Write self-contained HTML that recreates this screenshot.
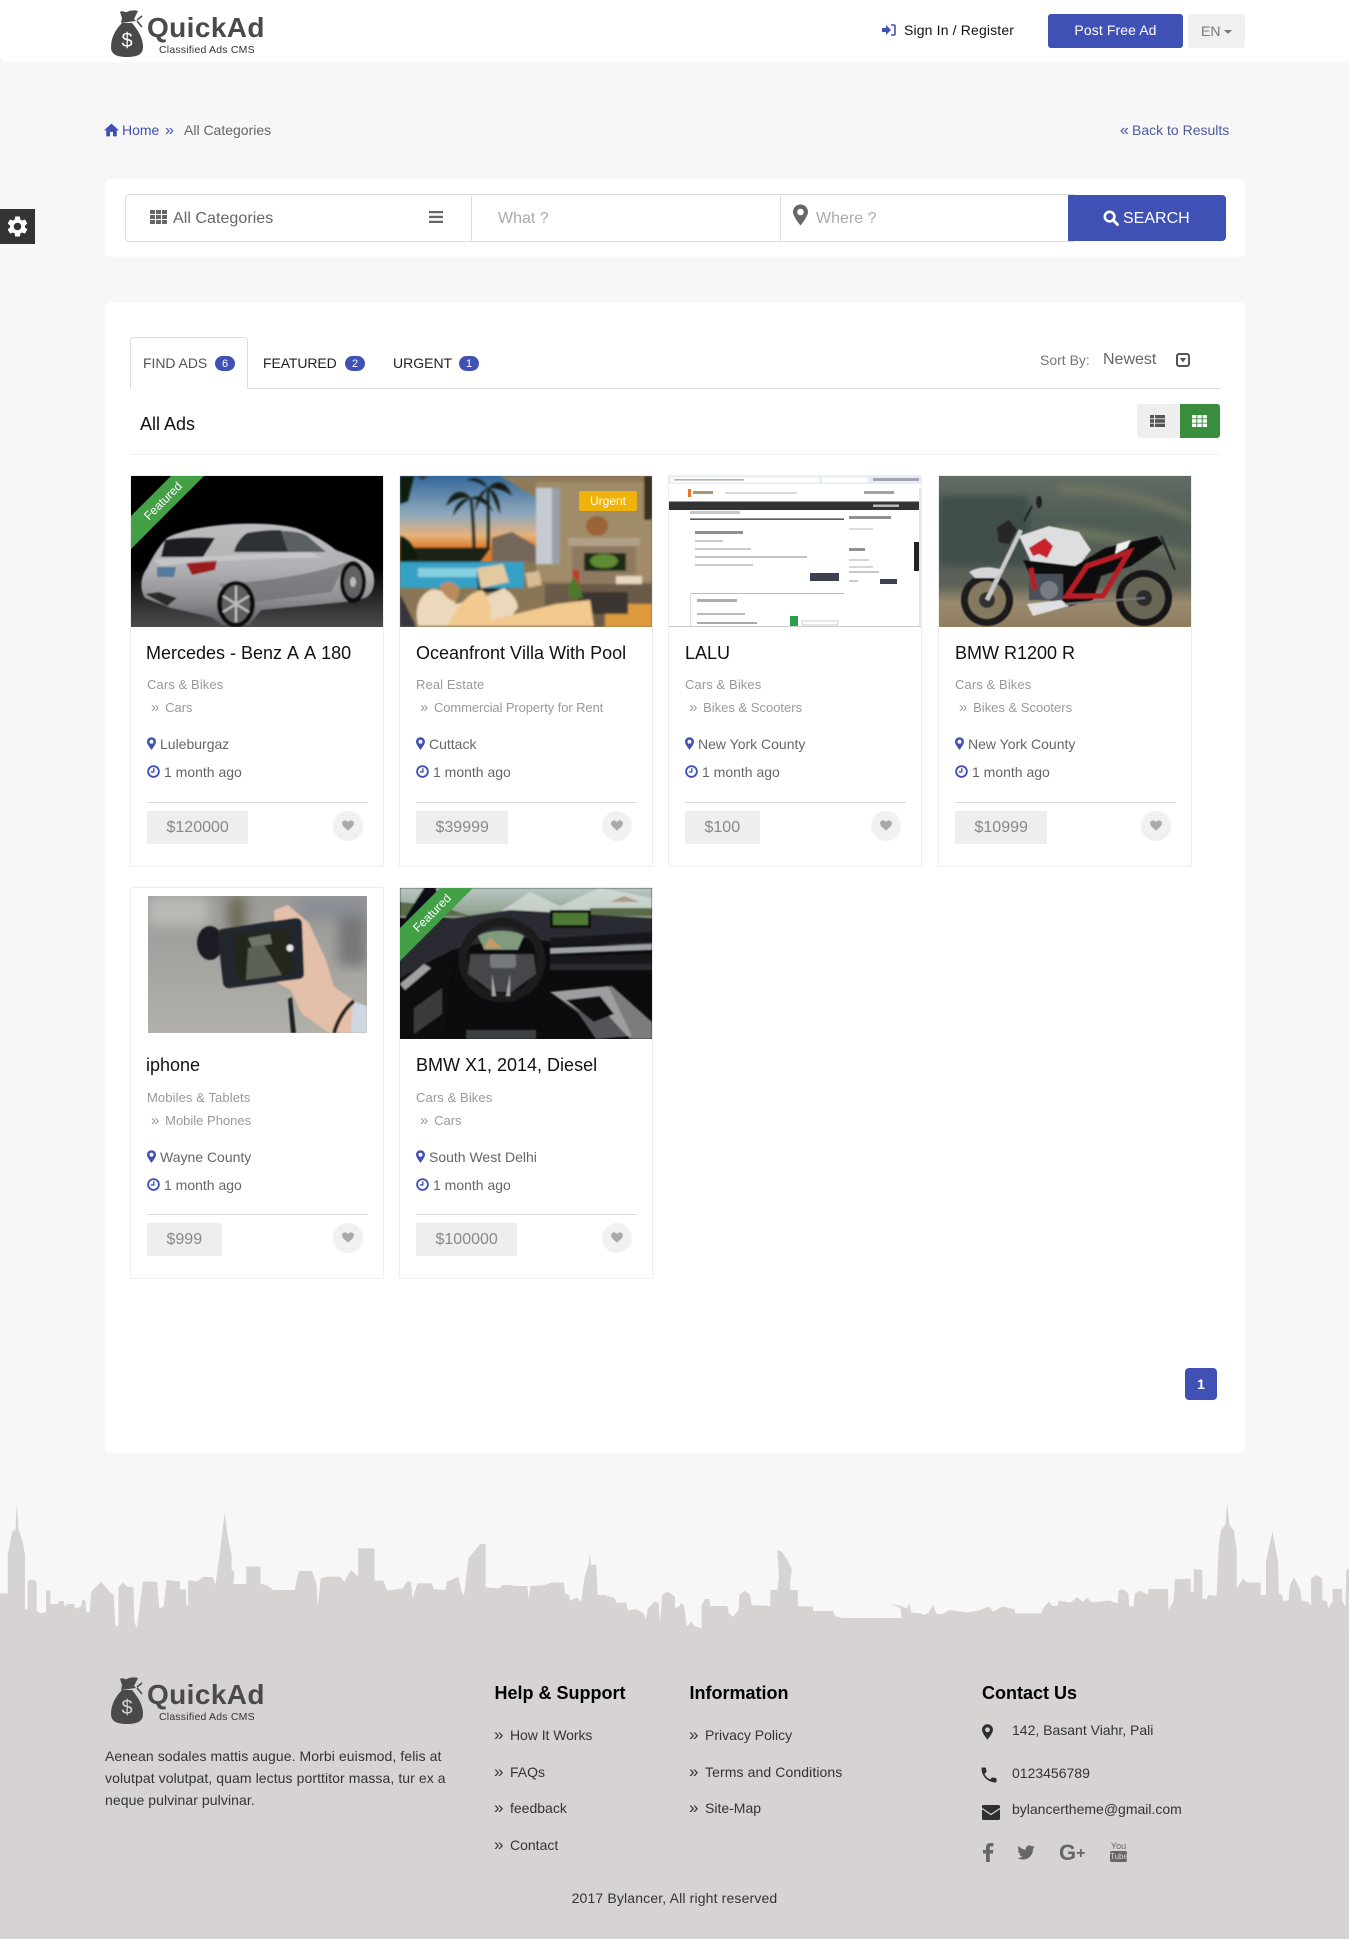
<!DOCTYPE html>
<html lang="en"><head><meta charset="utf-8"><title>QuickAd - All Categories</title>
<style>
*{box-sizing:border-box}
html,body{margin:0;padding:0}
body{position:relative;width:1349px;height:1939px;overflow:hidden;background:#f7f7f7;font-family:"Liberation Sans",Arial,sans-serif;font-size:14px;color:#333}
.a,.t{position:absolute}
.t{white-space:nowrap;line-height:20px}
svg{position:absolute;display:block;overflow:hidden}
.panel{position:absolute;background:#fff;border-radius:5px}
.card{position:absolute;width:254px;height:392px;background:#fff;box-shadow:inset 0 0 0 1px #eee;border-radius:2px}
.img{left:1px;top:1px;width:252px;height:151px}
.ti{left:17px;top:168px;font-size:18px;color:#111;font-kerning:none}
.c1{left:17px;top:200px;font-size:13px;color:#999;letter-spacing:.1px}
.c2{left:21px;top:223px;font-size:13px;color:#999}
.c2 i{font-style:normal;font-size:15px;display:inline-block;width:10.500px;line-height:14px}
.lo{left:30px;top:259px;color:#666}
.tm{left:34px;top:287px;color:#666}
.pi{left:17px;top:262px;width:9px;height:13px;color:#3f51b5}
.cl{left:17px;top:290px;width:13px;height:13px;color:#3f51b5}
.r2 .lo{top:260px}
.r2 .tm{top:288px}
.r2 .pi{top:263px}
.r2 .cl{top:291px}
.hr{position:absolute;left:17px;top:327px;width:221px;height:1px;background:#ddd}
.pr{position:absolute;left:17px;top:336px;height:33px;background:#eee;color:#888;font-size:16px;line-height:34px;padding:0 19.500px}
.he{position:absolute;left:203px;top:336px;width:30px;height:30px;border-radius:50%;background:#f1f1f1}
.he svg{left:9px;top:9px;width:12px;height:11px;color:#aaa}
.badge{position:absolute;width:20px;height:15px;border-radius:8px;background:#3f51b5;color:#fff;font-size:11px;line-height:16px;text-align:center}
.ln{color:#333}
.ch{font-size:17px;color:#333}
.rib{position:absolute;left:-2px;top:19px;width:70px;text-align:center;font-size:12px;line-height:14px;color:#fff;transform:rotate(-45deg)}
.k{left:16px}
</style></head>
<body>
<svg width="0" height="0" style="position:absolute">
<defs>
<symbol id="pin" viewBox="0 0 10 14"><path fill="currentColor" fill-rule="evenodd" d="M5 0C2.200 0 0 2.200 0 5c0 3 5 9 5 9s5-6 5-9c0-2.800-2.200-5-5-5zm0 7.200a2.200 2.200 0 1 1 0-4.400 2.200 2.200 0 0 1 0 4.400z"/></symbol>
<symbol id="clk" viewBox="0 0 13 13"><circle cx="6.500" cy="6.500" r="5.400" fill="none" stroke="currentColor" stroke-width="1.800"/><path d="M6.800 3.200v3.700H3.800" fill="none" stroke="currentColor" stroke-width="1.400"/></symbol>
<symbol id="hrt" viewBox="0 0 14 13"><path fill="currentColor" d="M7 12.500C3 9 0 7 0 4 0 1.800 1.600.5 3.500.5 5 .5 6.300 1.300 7 2.500 7.700 1.300 9 .5 10.500.5 12.400.5 14 1.800 14 4c0 3-3 5-7 8.500z"/></symbol>
<symbol id="bag" viewBox="0 0 32 47"><path fill="currentColor" d="M11 13C5 19 0 27 0 37c0 7 5 10 16 10s16-3 16-10c0-10-6-18-11-24z"/><path fill="currentColor" d="M9 2c3-2 5 1 7 0 3-2 8-2 11-1l-4 8 2 2-15 2 1-5z"/><path d="M26 10l5-4M26 11l5 6" stroke="currentColor" stroke-width="1.600" fill="none"/></symbol>
</defs></svg>

<!-- header -->
<div class="a" style="left:0;top:0;width:1349px;height:62px;background:#fff;border-radius:0 0 6px 6px"></div>
<svg style="left:111px;top:10px;width:32px;height:47px;color:#4a4a4a"><use href="#bag"/></svg>
<div class="t" style="left:111px;top:31px;width:32px;text-align:center;font-size:20px;color:#fff">$</div>
<div class="t" style="left:147px;top:17px;font-size:28px;line-height:22px;font-weight:bold;color:#4a4a4a;letter-spacing:.4px">QuickAd</div>
<div class="t" style="left:159px;top:40px;font-size:10.5px;color:#333;letter-spacing:.2px">Classified Ads CMS</div>

<svg style="left:882px;top:24px;width:14px;height:12px" viewBox="0 0 14 12"><path fill="#3f51b5" d="M0 4h4V1l5 5-5 5V8H0z"/><path fill="none" stroke="#3f51b5" stroke-width="1.600" d="M9 1h3a1 1 0 0 1 1 1v8a1 1 0 0 1-1 1H9"/></svg>
<div class="t" style="left:904px;top:20px;color:#111;letter-spacing:.15px">Sign In / Register</div>
<div class="a" style="left:1048px;top:14px;width:135px;height:34px;background:#3f51b5;border-radius:3px;color:#fff;text-align:center;line-height:32px;letter-spacing:.1px">Post Free Ad</div>
<div class="a" style="left:1188px;top:14px;width:57px;height:34px;background:#f0f0f0;border-radius:3px"></div>
<div class="t" style="left:1201px;top:21px;color:#777">EN</div>
<div class="a" style="left:1224px;top:30px;width:0;height:0;border:4px solid transparent;border-top-color:#777;border-bottom:0"></div>

<!-- breadcrumb -->
<svg style="left:104px;top:123px;width:15px;height:14px" viewBox="2 3 20 17"><path fill="#3f51b5" d="M10 20v-6h4v6h5v-8h3L12 3 2 12h3v8z"/></svg>
<div class="t" style="left:122px;top:120px;color:#3f51b5">Home</div>
<div class="t" style="left:165px;top:121px;color:#3f51b5;font-size:16px">»</div>
<div class="t" style="left:184px;top:120px;color:#666">All Categories</div>
<div class="t" style="left:1120px;top:121px;color:#3f51b5;font-size:16px">«</div>
<div class="t" style="left:1132px;top:120px;color:#4d5a9c">Back to Results</div>

<!-- settings tab -->
<div class="a" style="left:0;top:209px;width:35px;height:35px;background:#333"></div>
<svg style="left:5px;top:214px;width:25px;height:25px" viewBox="0 0 24 24"><path fill="#fff" d="M19.140 12.940c.04-.3.06-.61.06-.94 0-.32-.02-.64-.07-.94l2.030-1.580c.18-.14.23-.41.12-.61l-1.920-3.320c-.12-.22-.37-.29-.59-.22l-2.390.96c-.5-.38-1.030-.7-1.620-.94l-.36-2.540c-.04-.24-.24-.41-.48-.41h-3.840c-.24 0-.43.17-.47.41l-.36 2.540c-.59.24-1.130.57-1.620.94l-2.390-.96c-.22-.08-.47 0-.59.22L2.740 8.870c-.12.21-.08.47.12.61l2.030 1.580c-.05.3-.09.63-.09.94s.02.64.07.94l-2.030 1.580c-.18.14-.23.41-.12.61l1.920 3.320c.12.22.37.29.59.22l2.390-.96c.5.38 1.030.7 1.620.94l.36 2.540c.05.24.24.41.48.41h3.840c.24 0 .44-.17.47-.41l.36-2.540c.59-.24 1.130-.56 1.620-.94l2.390.96c.22.08.47 0 .59-.22l1.920-3.320c.12-.22.07-.47-.12-.61l-2.010-1.580zM12 15.600c-1.980 0-3.600-1.620-3.600-3.600s1.620-3.600 3.600-3.600 3.600 1.620 3.600 3.600-1.620 3.600-3.600 3.600z"/></svg>

<!-- search panel -->
<div class="panel" style="left:105px;top:179px;width:1140px;height:78px"></div>
<div class="a" style="left:125px;top:194px;width:950px;height:48px;border:1px solid #ddd;border-radius:4px 0 0 4px"></div>
<div class="a" style="left:471px;top:195px;width:1px;height:46px;background:#ddd"></div>
<div class="a" style="left:780px;top:195px;width:1px;height:46px;background:#ddd"></div>
<svg style="left:150px;top:210px;width:17px;height:14px" viewBox="0 0 17 14"><path fill="#666" d="M0 0h5v4H0zM6 0h5v4H6zM12 0h5v4h-5zM0 5h5v4H0zM6 5h5v4H6zM12 5h5v4h-5zM0 10h5v4H0zM6 10h5v4H6zM12 10h5v4h-5z"/></svg>
<div class="t" style="left:173px;top:209px;font-size:16px;color:#666;letter-spacing:.05px">All Categories</div>
<svg style="left:429px;top:211px;width:14px;height:12px" viewBox="0 0 14 12"><path fill="#666" d="M0 0h14v2.300H0zM0 4.800h14v2.300H0zM0 9.700h14V12H0z"/></svg>
<div class="t" style="left:498px;top:209px;font-size:16px;color:#aaa">What ?</div>
<svg style="left:793px;top:204px;width:15px;height:22px;color:#666"><use href="#pin" width="15" height="22"/></svg>
<div class="t" style="left:816px;top:209px;font-size:16px;color:#aaa">Where ?</div>
<div class="a" style="left:1068px;top:195px;width:158px;height:46px;background:#3f51b5;border-radius:0 4px 4px 0"></div>
<svg style="left:1103px;top:210px;width:16px;height:16px" viewBox="0 0 16 16"><circle cx="6.600" cy="6.600" r="4.800" fill="none" stroke="#fff" stroke-width="2.600"/><path d="M10 10l4.500 4.500" stroke="#fff" stroke-width="3" stroke-linecap="round"/></svg>
<div class="t" style="left:1123px;top:209px;font-size:16px;color:#fff">SEARCH</div>

<!-- main panel -->
<div class="panel" style="left:105px;top:302px;width:1140px;height:1151px"></div>
<div class="a" style="left:130px;top:388px;width:1090px;height:1px;background:#ddd"></div>
<div class="a" style="left:130px;top:337px;width:118px;height:52px;background:#fff;border:1px solid #ddd;border-bottom:0;border-radius:4px 4px 0 0"></div>
<div class="t" style="left:143px;top:353px;color:#555;letter-spacing:-.05px">FIND ADS</div>
<div class="badge" style="left:215px;top:356px">6</div>
<div class="t" style="left:263px;top:353px;color:#222;letter-spacing:-.1px">FEATURED</div>
<div class="badge" style="left:345px;top:356px">2</div>
<div class="t" style="left:393px;top:353px;color:#222">URGENT</div>
<div class="badge" style="left:459px;top:356px">1</div>
<div class="t" style="left:1040px;top:350px;color:#777">Sort By:</div>
<div class="t" style="left:1103px;top:350px;font-size:16px;color:#666">Newest</div>
<svg style="left:1176px;top:353px;width:14px;height:14px" viewBox="0 0 14 14"><rect x="1" y="1" width="12" height="12" rx="2" fill="none" stroke="#555" stroke-width="2"/><path d="M3.800 5h6.400L7 9.400z" fill="#555"/></svg>
<div class="t" style="left:140px;top:414px;font-size:18px;color:#111">All Ads</div>
<div class="a" style="left:1137px;top:404px;width:43px;height:34px;background:#eee;border-radius:3px 0 0 3px"></div>
<svg style="left:1150px;top:415px;width:15px;height:12px" viewBox="0 0 15 12"><path fill="#555" d="M0 0h4v3.400H0zM5 0h10v3.400H5zM0 4.300h4v3.400H0zM5 4.300h10v3.400H5zM0 8.600h4V12H0zM5 8.600h10V12H5z"/></svg>
<div class="a" style="left:1180px;top:404px;width:40px;height:34px;background:#388e3c;border-radius:0 3px 3px 0"></div>
<svg style="left:1192px;top:415px;width:15px;height:12px" viewBox="0 0 15 12"><path fill="#fff" d="M0 0h4.300v3.400H0zM5.300 0h4.400v3.400H5.300zM10.700 0H15v3.400h-4.300zM0 4.300h4.300v3.400H0zM5.300 4.300h4.400v3.400H5.300zM10.700 4.300H15v3.400h-4.300zM0 8.600h4.300V12H0zM5.300 8.600h4.400V12H5.300zM10.700 8.600H15V12h-4.300z"/></svg>
<div class="a" style="left:130px;top:454px;width:1090px;height:1px;background:#eee"></div>

<!-- card 1 -->
<div class="card" style="left:130px;top:475px">
<svg class="img" viewBox="0 0 252 151"><defs><linearGradient id="fl" x1="0" y1="0" x2="0" y2="1"><stop offset=".6" stop-color="#000"/><stop offset="1" stop-color="#4c4c4c"/></linearGradient><linearGradient id="cb" x1="0" y1="0" x2="0" y2="1"><stop offset="0" stop-color="#bdbdc0"/><stop offset=".45" stop-color="#b0b0b4"/><stop offset=".75" stop-color="#8e8e92"/><stop offset="1" stop-color="#5f5f63"/></linearGradient><filter id="bc"><feGaussianBlur stdDeviation=".7"/></filter></defs>
<rect width="252" height="151" fill="url(#fl)"/>
<g filter="url(#bc)">
<path fill="url(#cb)" d="M14 122C8 112 10 100 16 92 22 80 28 70 36 62 50 54 75 50 103 48c22-1 47 0 62 4 15 5 30 14 40 22 15 6 31 10 37 22 3 12 0 22-8 26l-20 4-84 8-12 15H91l-11-8-40-9z"/>
<path fill="#1d1d21" d="M34 64c15-3 33-3 50-2L72 81H30z"/>
<path fill="#2e3034" d="M103 76c2-8 7-15 13-19 10-2 22-3 33-3l46 22z"/>
<path fill="#5a5f64" d="M150 55c8 0 18 1 25 4l20 17h-38z"/>
<path fill="#9a1c1c" d="M55 87l31-3-2 10-23 5z"/>
<path fill="#56789a" d="M26 91h19l-2 10H26z"/>
<path fill="#6d6d72" d="M88 108c40-2 90-8 128-22l-16 30-92 12z" opacity=".7"/>
<path fill="#d8d8da" d="M22 84c40-4 110-6 158-8l10 6c-60 0-120 4-160 8z" opacity=".5"/>
<path fill="#2a2a2c" d="M14 118l22 12 10-8-18-6z"/>
<ellipse cx="222" cy="106" rx="13" ry="21" fill="#0c0c0c"/><ellipse cx="222" cy="106" rx="9" ry="16" fill="#626266"/><ellipse cx="222" cy="106" rx="3" ry="5" fill="#bbb"/>
<ellipse cx="105" cy="128" rx="19" ry="23" fill="#0c0c0c"/><ellipse cx="105" cy="128" rx="14" ry="19" fill="#5e5e62"/>
<path stroke="#bdbdbd" stroke-width="2.400" fill="none" d="M105 110v36M92 120l26 16M118 120l-26 16"/>
</g>
<path fill="#43a047" d="M40 0h33L0 73V40z"/></svg>
<div class="rib">Featured</div>
<div class="t ti k">Mercedes - Benz A A 180</div>
<div class="t c1">Cars &amp; Bikes</div>
<div class="t c2"><i>»</i> Cars</div>
<svg class="pi"><use href="#pin" width="9" height="13"/></svg><div class="t lo">Luleburgaz</div>
<svg class="cl"><use href="#clk" width="13" height="13"/></svg><div class="t tm">1 month ago</div>
<div class="hr"></div><div class="pr">$120000</div>
<div class="he"><svg><use href="#hrt" width="12" height="11"/></svg></div>
</div>

<!-- card 2 -->
<div class="card" style="left:399px;top:475px">
<svg class="img" viewBox="0 0 252 151"><defs><linearGradient id="sk" x1="0" y1="0" x2="0" y2="1"><stop offset="0" stop-color="#33689a"/><stop offset=".45" stop-color="#8fa8bc"/><stop offset=".7" stop-color="#e6b27a"/><stop offset=".85" stop-color="#dd7a2c"/></linearGradient><filter id="b1"><feGaussianBlur stdDeviation="1"/></filter></defs>
<rect width="252" height="151" fill="#8a7654"/>
<rect width="140" height="85" fill="url(#sk)"/>
<g filter="url(#b1)">
<path fill="#8f7a58" d="M100 0h152v30H150z"/>
<path fill="#a08c68" d="M136 6h116v100H136z"/>
<path fill="#c6cbd2" d="M136 12h24v76h-24z"/><path fill="#9aa0a8" d="M152 12h8v76h-8z"/>
<path fill="#3a2e22" d="M18 0h10l-6 4zM244 0h8v44h-8z"/>
<path fill="#1c2418" d="M0 72h90l-10 14H0z"/>
<path fill="none" stroke="#15201a" stroke-width="2.500" d="M74 76c0-18-1-36-3-54M88 74c1-22 0-42 0-62"/>
<g fill="#121c14"><path d="M71 22C62 12 52 14 46 30c7-6 15-10 25-8zM71 22c-9 0-16 6-18 18 5-8 11-14 18-18zM71 22c9-4 16 0 22 14-6-8-14-12-22-14z"/><path d="M88 12c8-9 18-8 24 8-7-6-15-8-24-8zM88 12c-5-9-13-12-22-8 8 0 15 3 22 8zM88 12c8 3 12 12 12 26-4-10-7-18-12-26zM88 12c-7 3-12 10-13 24 3-9 7-17 13-24z"/></g>
<path fill="#0f1a10" d="M0 0h14l-6 25-8 3zM0 60c8 2 14 10 18 22l-18 5z"/>
<path fill="#75665a" d="M92 62l20-6 24 14v16H92z"/>
<path fill="#8d7a60" d="M172 70h64v38h-64z"/>
<path fill="#b0a088" d="M168 62h72v8h-72z"/>
<path fill="#1c2a16" d="M184 77h42v18h-42z"/><ellipse cx="204" cy="85" rx="14" ry="7" fill="#5f8a30"/>
<ellipse cx="197" cy="50" rx="11" ry="10" fill="#9c6238"/>
<path fill="#e8d8c0" d="M216 100h26v9h-26z"/>
<path fill="#35a0c6" d="M0 86h124v26H0z"/><path fill="#86d0e2" d="M18 92h80v9H18z"/>
<path fill="#6a5a46" d="M145 108h107v43H145z"/><path fill="#dc9a3e" d="M205 128h47v23h-47z"/>
<path fill="#e3c9a0" d="M77 92l26-4 6 18-28 6z"/><path fill="#201c18" d="M77 92l3 20h28l2 22h-4l-2-18H84l-2 12h-4z"/>
<path fill="#d8bc94" d="M125 97l14-2 3 14-14 3z"/>
<path fill="#3a3430" d="M178 116h50v22h-50z"/>
<path fill="#b8382c" d="M172 94l4 24 4 0-1-24z"/><path fill="#4d7a2a" d="M168 112l6-12 6 12 3 10h-14z"/>
<path fill="#34363f" d="M0 118l16 33H0z"/>
<path fill="#ecd8bc" d="M18 150c-4-16 0-30 12-36 8-3 20 4 26 14l30-8 18-8c10 6 14 14 14 20l-14 18z"/>
<path fill="#f2c98f" d="M48 150c6-14 18-34 34-36 8 8 10 18 8 30l66-16 34-4 4 26z"/>
<path fill="#bb8c5e" d="M40 110c6-6 14-6 20 4l-4 12c-8-2-14-8-16-16z"/>
</g>
<rect x="179" y="15" width="58" height="20" rx="2" fill="#efb30c"/></svg>
<div class="t" style="left:180px;top:16px;width:58px;text-align:center;font-size:12px;color:#fff">Urgent</div>
<div class="t ti">Oceanfront Villa With Pool</div>
<div class="t c1">Real Estate</div>
<div class="t c2" style="letter-spacing:-.1px"><i>»</i> Commercial Property for Rent</div>
<svg class="pi"><use href="#pin" width="9" height="13"/></svg><div class="t lo">Cuttack</div>
<svg class="cl"><use href="#clk" width="13" height="13"/></svg><div class="t tm">1 month ago</div>
<div class="hr"></div><div class="pr">$39999</div>
<div class="he"><svg><use href="#hrt" width="12" height="11"/></svg></div>
</div>

<!-- card 3 -->
<div class="card" style="left:668px;top:475px">
<svg class="img" viewBox="0 0 252 151">
<rect width="252" height="151" fill="#fff"/>
<rect width="252" height="8" fill="#e6edf4"/><rect x="2" y="1.500" width="148" height="5" fill="#fff"/><rect x="153" y="1.500" width="46" height="5" fill="#fff"/>
<g fill="#555"><rect x="5" y="3" width="70" height="1.600" opacity=".45"/><rect x="204" y="2" width="46" height="3" opacity=".45"/><rect x="19" y="13" width="3" height="8" fill="#e8762a"/><rect x="24" y="15" width="20" height="3" fill="#8a6a3a" opacity=".7"/><rect x="56" y="16" width="72" height="2" opacity=".22"/><rect x="195" y="15" width="30" height="3" opacity=".55"/></g>
<rect y="25.500" width="250" height="8.500" fill="#333"/><rect x="204" y="28.500" width="26" height="2.500" fill="#bbb"/>
<g fill="#777"><rect x="21" y="35" width="50" height="3" opacity=".4"/><rect x="180" y="40" width="42" height="3" fill="#222" opacity=".5"/><rect x="180" y="52" width="24" height="2" opacity=".25"/><rect x="180" y="72" width="16" height="3" fill="#222" opacity=".5"/><rect x="180" y="83" width="20" height="2" opacity=".3"/><rect x="180" y="90" width="24" height="2" opacity=".3"/><rect x="180" y="95" width="30" height="2" opacity=".4"/><rect x="180" y="104" width="9" height="2" opacity=".4"/></g>
<rect x="21" y="42.500" width="154" height="1.300" fill="#333"/>
<g fill="#555"><rect x="26" y="55" width="48" height="3" fill="#222" opacity=".5"/><rect x="26" y="64" width="28" height="2" opacity=".3"/><rect x="26" y="72" width="56" height="2" opacity=".3"/><rect x="26" y="80" width="112" height="2" opacity=".35"/><rect x="26" y="88" width="58" height="2" opacity=".3"/></g>
<rect x="141" y="97" width="29" height="8" fill="#3d4050"/><rect x="211" y="103" width="17" height="5" fill="#3d4050"/>
<rect x="245" y="66" width="5" height="29" fill="#222"/>
<rect x="21" y="117" width="154" height="1" fill="#bbb"/><rect x="21" y="117" width="1" height="34" fill="#ddd"/>
<rect x="28" y="123" width="40" height="3" fill="#333" opacity=".4"/><rect x="28" y="137" width="48" height="2" fill="#555" opacity=".4"/><rect x="28" y="146" width="60" height="2" fill="#555" opacity=".5"/>
<rect x="121" y="140" width="8" height="11" fill="#2e9e4a"/><rect x="133" y="145" width="36" height="4" fill="none" stroke="#bbb" stroke-width=".7"/>
<rect x="250" y="12" width="2" height="139" fill="#e6e6e6"/>
<rect y="150" width="252" height="1" fill="#ccc"/>
</svg>
<div class="t ti">LALU</div>
<div class="t c1">Cars &amp; Bikes</div>
<div class="t c2"><i>»</i> Bikes &amp; Scooters</div>
<svg class="pi"><use href="#pin" width="9" height="13"/></svg><div class="t lo">New York County</div>
<svg class="cl"><use href="#clk" width="13" height="13"/></svg><div class="t tm">1 month ago</div>
<div class="hr"></div><div class="pr">$100</div>
<div class="he"><svg><use href="#hrt" width="12" height="11"/></svg></div>
</div>

<!-- card 4 -->
<div class="card" style="left:938px;top:475px">
<svg class="img" viewBox="0 0 252 151"><defs><linearGradient id="bg" x1="0" y1="0" x2="0" y2="1"><stop offset="0" stop-color="#626c64"/><stop offset=".3" stop-color="#4f5c54"/><stop offset=".72" stop-color="#5e6258"/><stop offset=".84" stop-color="#9a8a6e"/><stop offset="1" stop-color="#8f7d60"/></linearGradient><filter id="b2"><feGaussianBlur stdDeviation="4"/></filter><filter id="b3"><feGaussianBlur stdDeviation=".6"/></filter></defs>
<rect width="252" height="151" fill="url(#bg)"/>
<g filter="url(#b2)"><path fill="#767b64" d="M120 8c40 0 90 8 132 28v12C210 26 170 18 120 18z" opacity=".7"/><path fill="#6f7860" d="M120 50c40 5 70 10 132 28v8C200 70 170 64 120 60z"/><path fill="#414d48" d="M0 20h90v70H0z"/></g>
<g filter="url(#b3)">
<circle cx="48" cy="124" r="26" fill="#1c1c1c"/><circle cx="48" cy="124" r="19" fill="#857a60"/><circle cx="48" cy="124" r="8" fill="#333"/>
<circle cx="205" cy="122" r="28" fill="#181818"/><circle cx="205" cy="122" r="21" fill="#6a6656"/><circle cx="205" cy="122" r="8" fill="#2a2a2a"/>
<path stroke="#c8c8c8" stroke-width="4.500" d="M48 124L82 54" fill="none"/>
<path fill="#d6d6d8" d="M30 96c10-6 22-6 34-2l-8 8H36z"/>
<path fill="#262626" d="M58 52l12-8 8 10-8 14-10-2z"/><path stroke="#222" stroke-width="2" d="M85 45l8-15" fill="none"/><ellipse cx="100" cy="26" rx="3" ry="6" fill="#222"/>
<path fill="#dedee0" d="M80 60l30-10 30 6 12 18-14 18-46-6z"/>
<path fill="#c8242a" d="M90 72l16-10 8 8-6 12-8-4-6 2z"/>
<path fill="#111" d="M84 84l52 6 30-18 52-12 6 8-32 22-30 10-8 24-30 8-24-14z"/>
<path fill="#4a5058" d="M90 98h34v26H90z"/><circle cx="110" cy="114" r="9" fill="#777c84"/>
<path fill="none" stroke="#b81f26" stroke-width="5" d="M128 120l20-30 42-14-26 44zM92 92l4 22"/>
<path fill="#e0e0e2" d="M88 128l34-4 8 6-36 10z"/><path fill="#f0f0f0" d="M178 68l14-4-4 8-12 6z"/>
<path stroke="#777" stroke-width="2" d="M126 128l80-6" fill="none"/>
<path stroke="#222" stroke-width="2" d="M222 60l14 34" fill="none"/>
</g></svg>
<div class="t ti">BMW R1200 R</div>
<div class="t c1">Cars &amp; Bikes</div>
<div class="t c2"><i>»</i> Bikes &amp; Scooters</div>
<svg class="pi"><use href="#pin" width="9" height="13"/></svg><div class="t lo">New York County</div>
<svg class="cl"><use href="#clk" width="13" height="13"/></svg><div class="t tm">1 month ago</div>
<div class="hr"></div><div class="pr">$10999</div>
<div class="he"><svg><use href="#hrt" width="12" height="11"/></svg></div>
</div>

<!-- card 5 -->
<div class="card r2" style="left:130px;top:887px">
<svg style="left:18px;top:9px;width:219px;height:137px" viewBox="0 0 219 137"><defs><linearGradient id="ip" x1="0" y1="0" x2="0" y2="1"><stop offset="0" stop-color="#9a9a96"/><stop offset=".5" stop-color="#a5a4a0"/><stop offset="1" stop-color="#b2b0aa"/></linearGradient><filter id="b4"><feGaussianBlur stdDeviation="6"/></filter><filter id="b5"><feGaussianBlur stdDeviation=".7"/></filter></defs>
<rect width="219" height="137" fill="url(#ip)"/>
<g filter="url(#b4)"><rect x="80" y="0" width="18" height="40" fill="#6e6a58"/><rect x="0" y="0" width="60" height="30" fill="#b9b9b5"/><rect x="150" y="0" width="69" height="25" fill="#8a8e94"/><rect x="190" y="20" width="29" height="50" fill="#78787a"/></g>
<g filter="url(#b5)">
<path fill="#e4c0aa" d="M126 14l14-5 21 18 17 37 8 27 24 16 8 3v27h-37l-28-20-10-23-14-7z"/>
<path fill="#cfd8e0" d="M205 106l14 4v27h-16z"/>
<path fill="#1e2026" d="M144 101l4 36h-5l-3-34z"/>
<path fill="none" stroke="#2a2622" stroke-width="4" d="M186 137c4-14 12-26 20-32"/>
<ellipse cx="62" cy="47" rx="13" ry="17" fill="#1d1f26"/>
<path fill="#23252e" d="M74 33l73-11c5 0 7 2 7 6l2 50c0 3-2 5-5 5l-68 9c-4 1-7-1-8-5l-5-46c-1-4 0-7 4-8z"/>
<path fill="#22261f" d="M85 38l56-7 6 46-57 9z"/><path fill="#5c6257" d="M100 52l16-3 18 30-36 5z"/><path fill="#6c7568" d="M100 42l22-4 2 10-20 3z"/>
<circle cx="142" cy="52" r="3.500" fill="#e8e8e8"/>
</g></svg>
<div class="t ti k">iphone</div>
<div class="t c1" style="top:201px">Mobiles &amp; Tablets</div>
<div class="t c2" style="top:224px"><i>»</i> Mobile Phones</div>
<svg class="pi"><use href="#pin" width="9" height="13"/></svg><div class="t lo">Wayne County</div>
<svg class="cl"><use href="#clk" width="13" height="13"/></svg><div class="t tm">1 month ago</div>
<div class="hr"></div><div class="pr">$999</div>
<div class="he"><svg><use href="#hrt" width="12" height="11"/></svg></div>
</div>

<!-- card 6 -->
<div class="card r2" style="left:399px;top:887px">
<svg class="img" viewBox="0 0 252 151"><defs><linearGradient id="mt" x1="0" y1="0" x2="0" y2="1"><stop offset="0" stop-color="#b8c8c4"/><stop offset="1" stop-color="#8a9a84"/></linearGradient><filter id="b6"><feGaussianBlur stdDeviation=".8"/></filter></defs>
<rect width="252" height="151" fill="#0c0c0e"/>
<g filter="url(#b6)">
<rect width="252" height="30" fill="url(#mt)"/>
<path fill="#d8e0dc" d="M100 24l30-20 30 14 40-18 52 10v14z" opacity=".7"/>
<path fill="#5a6a4c" d="M0 14l40 4 30 10H0zM190 20h62v8h-62z"/>
<path fill="#b09a8a" d="M210 14l14-6 16 6z"/>
<path fill="#101014" d="M24 0h12l8 30-30 46-14-6V38z"/>
<path fill="#2b2c30" d="M0 62l40-30 70-10 142 8v28l-100-4-40-6-60 14-52 30z"/>
<rect x="150" y="22" width="41" height="18" rx="1" fill="#0c0c0c"/><rect x="153" y="25" width="35" height="12" fill="#4d7a34"/>
<path fill="#9ea2a4" d="M150 60l102-4v6l-102 4z"/>
<path fill="#15161a" d="M150 50l102-6v10l-102 4z"/>
<path fill="#15161a" d="M150 68l102-2v10H150z"/>
<rect x="150" y="76" width="102" height="6" fill="#2a2b2f"/>
<ellipse cx="102" cy="72" rx="39" ry="38" fill="none" stroke="#1b1c1e" stroke-width="9"/>
<path fill="#7f9a7c" d="M78 48c12-7 34-7 46 0l-6 14H84z"/><path fill="#c99a64" d="M90 50l12 10H84z"/>
<path fill="#45474b" d="M70 66h64l2 20-24 18h-20l-24-18z"/>
<rect x="90" y="66" width="26" height="14" rx="3" fill="#75787c"/>
<path fill="#a8a8a8" d="M92 86l4 22h-4zM110 86l-4 22h4z"/>
<path fill="#070708" d="M0 90l40-22 14 12-10 71H0z"/>
<path fill="#a0a0a2" d="M0 96l24-20 7 4-26 22z"/><path fill="#3a3b3e" d="M14 120l28-20v26l-28 20z"/>
<path fill="#55575a" d="M150 104l58-6 24 50-36 3-18-26z"/>
<path fill="#d8d8da" d="M150 104l62-6 40 36v17h-22l-26-28-20 3z" opacity=".55"/>
<path fill="#111" d="M166 112l34-4 14 18-20 8z"/>
<rect x="66" y="142" width="70" height="9" fill="#3e3f42"/>
</g>
<path fill="#43a047" d="M40 0h33L0 73V40z"/></svg>
<div class="rib">Featured</div>
<div class="t ti">BMW X1, 2014, Diesel</div>
<div class="t c1" style="top:201px">Cars &amp; Bikes</div>
<div class="t c2" style="top:224px"><i>»</i> Cars</div>
<svg class="pi"><use href="#pin" width="9" height="13"/></svg><div class="t lo">South West Delhi</div>
<svg class="cl"><use href="#clk" width="13" height="13"/></svg><div class="t tm">1 month ago</div>
<div class="hr"></div><div class="pr">$100000</div>
<div class="he"><svg><use href="#hrt" width="12" height="11"/></svg></div>
</div>

<!-- pagination -->
<div class="a" style="left:1185px;top:1368px;width:32px;height:32px;background:#3f51b5;border-radius:4px;color:#fff;font-weight:bold;text-align:center;line-height:32px">1</div>

<!-- skyline -->
<svg style="left:0;top:0;width:1349px;height:1939px" viewBox="0 0 1349 1939">
<rect x="0" y="1630" width="1349" height="309" fill="#d8d3d3"/>
<g transform="translate(0,1480) scale(.4305,.3333)"><polygon fill="#d8d3d3" points="0,600 0,340 18,340 18,225 28,155 36,150 39,68 43,150 52,180 58,225 58,388 64,388 64,302 75,298 85,305 85,393 95,400 107,396 107,332 117,332 117,372 135,372 137,363 148,363 150,380 158,372 172,372 175,385 188,380 192,358 198,362 200,395 208,398 212,335 235,305 255,335 264,345 268,440 275,435 275,322 285,308 295,320 310,322 312,425 318,445 332,305 365,305 370,385 380,380 387,300 418,305 418,328 432,328 433,375 437,375 437,300 458,305 472,290 495,292 500,315 505,272 510,225 522,96 528,165 538,225 538,270 545,275 542,312 572,312 572,260 605,260 605,310 620,316 635,330 685,330 690,295 695,273 725,273 735,310 738,382 745,295 760,290 790,290 800,305 815,270 832,290 832,205 870,205 870,302 890,302 900,332 935,325 945,305 955,305 958,355 970,310 1003,310 1008,328 1035,330 1038,305 1065,290 1073,340 1078,345 1088,235 1115,192 1128,192 1128,322 1160,325 1168,315 1188,315 1195,318 1225,318 1228,360 1232,318 1265,315 1280,308 1310,308 1312,340 1322,345 1325,362 1340,352 1350,365 1358,292 1368,250 1370,218 1373,255 1385,255 1388,345 1405,345 1428,355 1432,368 1455,368 1458,390 1480,388 1495,400 1500,420 1505,385 1520,365 1530,368 1533,432 1538,345 1550,335 1568,350 1568,600"/></g>
<g transform="translate(675,1480) scale(.4298,.3333)"><polygon fill="#d8d3d3" points="0,600 0,385 10,378 15,368 22,380 27,440 38,425 45,438 62,445 62,375 70,357 80,357 82,378 122,378 125,400 135,410 148,390 150,345 162,332 175,345 178,375 222,378 222,330 238,330 242,290 238,210 248,215 262,240 272,270 268,300 268,330 286,330 286,378 320,380 322,393 368,393 372,408 390,414 527,414 525,385 500,370 525,378 540,385 545,368 550,398 572,400 580,405 590,398 600,375 608,400 620,403 640,390 680,398 710,390 730,380 740,395 762,380 790,388 792,400 852,400 858,382 870,365 878,378 890,378 893,362 920,368 935,352 950,365 958,352 970,367 1010,362 1030,370 1032,332 1042,328 1055,340 1057,380 1067,378 1070,340 1082,332 1100,345 1102,327 1147,327 1148,390 1160,362 1163,298 1200,296 1200,335 1207,335 1207,267 1227,270 1227,355 1237,358 1240,345 1260,348 1265,200 1270,150 1280,135 1285,70 1290,135 1300,150 1307,210 1307,325 1322,295 1330,307 1363,308 1363,345 1375,345 1375,245 1390,155 1403,245 1405,340 1413,345 1415,365 1428,360 1430,320 1440,292 1455,330 1458,362 1472,365 1480,378 1480,295 1492,285 1506,295 1506,360 1517,365 1520,385 1530,365 1530,327 1552,327 1553,365 1560,380 1562,270 1568,265 1568,600"/></g>
</svg>

<!-- footer -->
<svg style="left:111px;top:1677px;width:32px;height:47px;color:#4a4a4a"><use href="#bag"/></svg>
<div class="t" style="left:111px;top:1698px;width:32px;text-align:center;font-size:20px;color:#d8d3d3">$</div>
<div class="t" style="left:147px;top:1684px;font-size:28px;line-height:22px;font-weight:bold;color:#4a4a4a;letter-spacing:.4px">QuickAd</div>
<div class="t" style="left:159px;top:1707px;font-size:10.5px;color:#333;letter-spacing:.2px">Classified Ads CMS</div>
<div class="a" style="left:105px;top:1745px;width:350px;line-height:22px;color:#333;letter-spacing:.08px">Aenean sodales mattis augue. Morbi euismod, felis at volutpat volutpat, quam lectus porttitor massa, tur ex a neque pulvinar pulvinar.</div>

<div class="t" style="left:494.500px;top:1683px;font-size:18px;font-weight:bold;color:#000">Help &amp; Support</div>
<div class="t ch" style="left:494px;top:1725px">»</div><div class="t ln" style="left:510px;top:1725px;letter-spacing:-.05px">How It Works</div>
<div class="t ch" style="left:494px;top:1762px">»</div><div class="t ln" style="left:510px;top:1762px">FAQs</div>
<div class="t ch" style="left:494px;top:1798px">»</div><div class="t ln" style="left:510px;top:1798px">feedback</div>
<div class="t ch" style="left:494px;top:1835px">»</div><div class="t ln" style="left:510px;top:1835px">Contact</div>

<div class="t" style="left:689.500px;top:1683px;font-size:18px;font-weight:bold;color:#000">Information</div>
<div class="t ch" style="left:689px;top:1725px">»</div><div class="t ln" style="left:705px;top:1725px">Privacy Policy</div>
<div class="t ch" style="left:689px;top:1762px">»</div><div class="t ln" style="left:705px;top:1762px;letter-spacing:.1px">Terms and Conditions</div>
<div class="t ch" style="left:689px;top:1798px">»</div><div class="t ln" style="left:705px;top:1798px">Site-Map</div>

<div class="t" style="left:982px;top:1683px;font-size:18px;font-weight:bold;color:#000">Contact Us</div>
<svg style="left:982px;top:1724px;width:11px;height:16px;color:#2f2f33"><use href="#pin" width="11" height="16"/></svg>
<div class="t ln" style="left:1012px;top:1720px">142, Basant Viahr, Pali</div>
<svg style="left:979px;top:1765px;width:20px;height:20px" viewBox="0 0 24 24"><path fill="#2f2f33" d="M6.620 10.790c1.440 2.830 3.760 5.140 6.590 6.590l2.200-2.200c.27-.27.67-.36 1.020-.24 1.120.37 2.330.57 3.570.57.55 0 1 .45 1 1V20c0 .55-.45 1-1 1-9.390 0-17-7.610-17-17 0-.55.45-1 1-1h3.500c.55 0 1 .45 1 1 0 1.250.2 2.450.57 3.570.11.35.03.74-.25 1.020l-2.200 2.200z"/></svg>
<div class="t ln" style="left:1012px;top:1763px">0123456789</div>
<svg style="left:982px;top:1805px;width:18px;height:15px" viewBox="0 0 18 15"><rect width="18" height="15" rx="1.500" fill="#2f2f33"/><path d="M0 3.500l9 6 9-6" fill="none" stroke="#d8d3d3" stroke-width="1.300"/></svg>
<div class="t ln" style="left:1012px;top:1799px">bylancertheme@gmail.com</div>
<svg style="left:983px;top:1843px;width:11px;height:19px" viewBox="0 0 11 19"><path fill="#666" d="M3 19V10.500H0V7h3V4.500C3 1.500 4.800 0 7.500 0c1.300 0 2.500.1 3 .2v3.200H8.500C7 3.400 6.800 4.100 6.800 5.100V7h3.600l-.5 3.500H6.800V19z"/></svg>
<svg style="left:1016px;top:1842px;width:20px;height:20px" viewBox="0 0 24 24"><path fill="#666" d="M22.460 6c-.77.35-1.600.58-2.460.69.88-.53 1.560-1.370 1.880-2.380-.83.5-1.750.85-2.720 1.050C18.370 4.500 17.260 4 16 4c-2.350 0-4.270 1.920-4.270 4.290 0 .34.04.67.11.98C8.280 9.090 5.110 7.380 3 4.790c-.37.63-.58 1.370-.58 2.150 0 1.490.75 2.810 1.910 3.560-.71 0-1.370-.2-1.950-.5v.03c0 2.080 1.480 3.820 3.440 4.210a4.220 4.220 0 01-1.930.07 4.280 4.280 0 004 2.980 8.521 8.521 0 01-5.330 1.840c-.34 0-.68-.02-1.020-.06C3.440 20.290 5.700 21 8.120 21 16 21 20.330 14.460 20.330 8.790c0-.19 0-.37-.01-.56.84-.6 1.560-1.360 2.140-2.230z"/></svg>
<div class="t" style="left:1059px;top:1843px;font-size:22px;font-weight:bold;color:#666">G<span style="font-size:16px;position:relative;top:-2px">+</span></div>
<div class="t" style="left:1110px;top:1842px;width:17px;text-align:center;font-size:9px;line-height:9px;color:#666">You</div>
<div class="a" style="left:1110px;top:1851px;width:17px;height:11px;background:#666;border-radius:2px;color:#d8d3d3;font-size:8px;line-height:11px;text-align:center">Tube</div>

<div class="t" style="left:0;top:1888px;width:1349px;text-align:center;color:#333;letter-spacing:.15px">2017 Bylancer, All right reserved</div>
</body></html>
